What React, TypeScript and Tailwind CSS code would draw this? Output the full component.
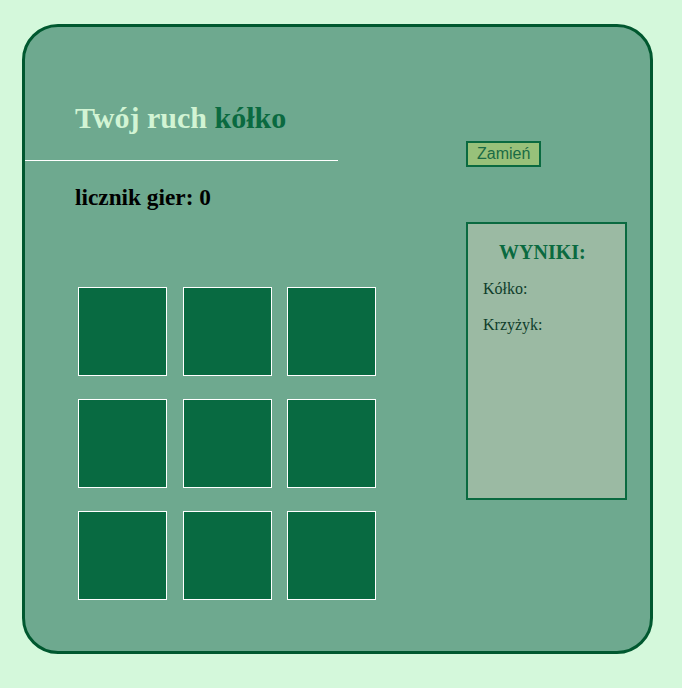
export default function App() {
  const cells = Array.from({ length: 9 }, (_, i) => i);

  return (
    <div className="min-h-screen w-full bg-[#d4f8db] pt-[24px] pl-[22px] font-['Liberation_Serif',serif]">
      <div className="flex w-[631px] h-[630px] rounded-[36px] border-[3px] border-[#00582f] bg-[#6ea98f]">
        {/* lewa kolumna: nagłówek, licznik i plansza */}
        <div className="w-[313px] pt-[73px]">
          <h1 className="pl-[50px] text-[30px] leading-[36px] font-bold text-[#d2f4d4]">
            Twój ruch <span className="text-[#0a6a40]">kółko</span>
          </h1>
          <hr className="mt-[24px] border-0 border-t border-white" />
          <h2 className="mt-[22px] pl-[50px] text-[23.3px] leading-[28px] font-bold text-black">
            licznik gier: 0
          </h2>
          <div className="mt-[76px] ml-[53px] grid grid-cols-[repeat(3,89px)] gap-x-[15.5px] gap-y-[23px] w-max">
            {cells.map((c) => (
              <div
                key={c}
                className="w-[89px] h-[89px] border border-white bg-[#086a41] cursor-pointer"
              />
            ))}
          </div>
        </div>

        {/* prawa kolumna: przycisk i wyniki */}
        <div className="ml-[128px] pt-[114px]">
          <button className="h-[26px] px-[9px] border-2 border-[#0a6a40] bg-[#98c17a] text-[16px] leading-[20px] text-[#1a6b45] font-['Liberation_Sans',sans-serif]">
            Zamień
          </button>
          <div className="mt-[55px] w-[161px] h-[278px] border-2 border-[#0a6a40] bg-[#9bbaa3]">
            <h3 className="pt-[16px] pl-[31px] text-[20px] leading-[24px] font-bold text-[#0a6a40]">
              WYNIKI:
            </h3>
            <div className="pl-[15px] text-[16px] leading-[20px] text-[#0f3d2a]">
              <p className="mt-[15px]">Kółko:</p>
              <p className="mt-[16px]">Krzyżyk:</p>
            </div>
          </div>
        </div>
      </div>
    </div>
  );
}
